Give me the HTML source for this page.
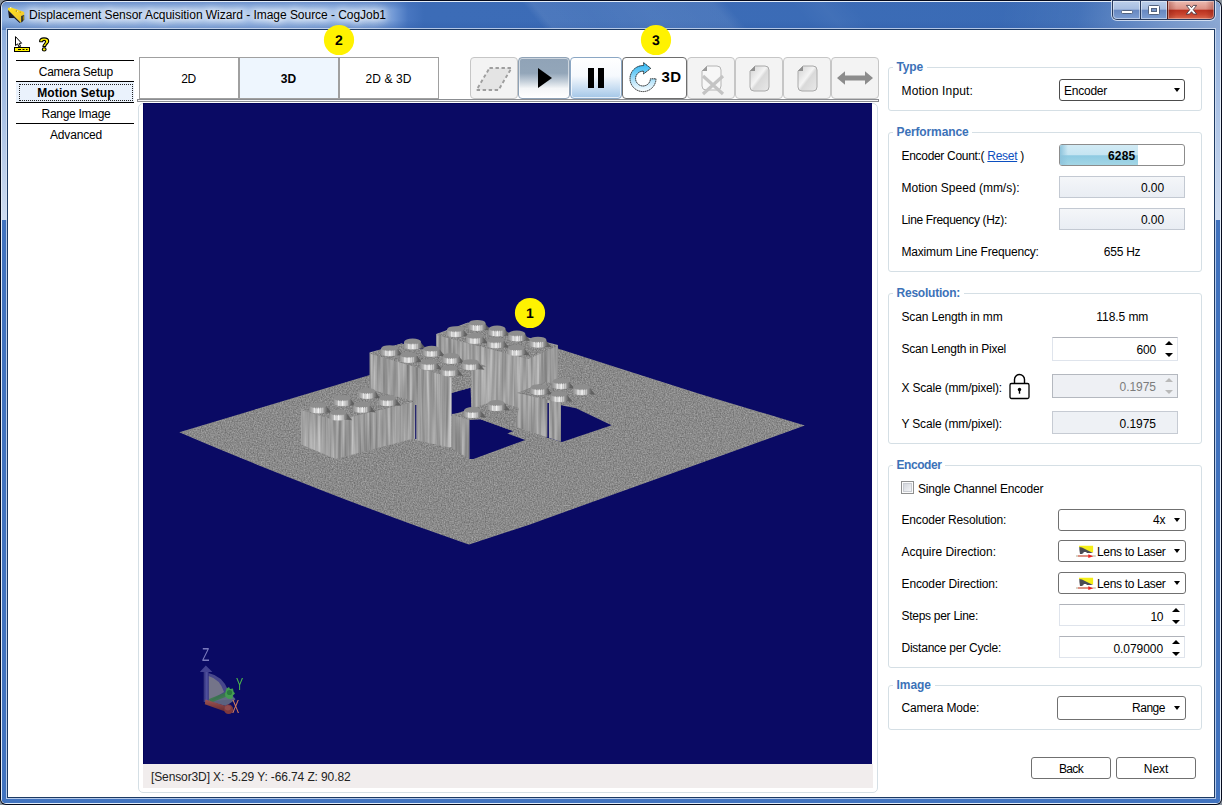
<!DOCTYPE html>
<html lang="en"><head><meta charset="utf-8"><title>Displacement Sensor Acquisition Wizard - Image Source - CogJob1</title>
<style>
html,body{margin:0;padding:0}
body{width:1222px;height:805px;overflow:hidden;background:#8a939d;position:relative;font-family:'Liberation Sans',sans-serif;font-size:12px;color:#000}
div,span,svg,section{position:absolute;box-sizing:border-box}
section{left:0;top:0}
.t{white-space:pre;display:block}
#win{left:0;top:0;width:1222px;height:805px;border-radius:7px 7px 6px 6px;background:#050a1c;overflow:hidden}
#hl{left:1px;top:1px;width:1220px;height:803px;border-radius:6px 6px 5px 5px;background:#e4edf8}
#glass{left:2px;top:2px;width:1218px;height:801px;border-radius:5px 5px 4px 4px;overflow:hidden;background:#3d6dbb}
#client{left:8px;top:30px;width:1206px;height:767px;background:#fff}
#cborder{left:7px;top:29px;width:1208px;height:769px;background:#1d3a63}
.gb{border:1px solid #d5dfe5;border-radius:3px}
.gl{background:#fff;color:#3c72b8;font-weight:bold;padding:0 3px}
.combo{border:1px solid #707070;border-radius:3px;background:#fff}
.fld{border:1px solid #c3c9d2;background:linear-gradient(#f4f6f9,#e9edf3)}
.num{border:1px solid #dfe4ec;border-top-color:#b0b3ba;background:#fff}
.btn{border:1px solid #707070;border-radius:3px;background:#fff}
.tb{border:1px solid #c9c9c9;border-radius:3px;background:#f3f3f3}
.arr{width:0;height:0;border-left:3.5px solid transparent;border-right:3.5px solid transparent;border-top:4px solid #000}
.up{width:0;height:0;border-left:4px solid transparent;border-right:4px solid transparent;border-bottom:4.5px solid #000}
.dn{width:0;height:0;border-left:4px solid transparent;border-right:4px solid transparent;border-top:4.5px solid #000}
.mk text{font-weight:bold;font-size:14px;text-anchor:middle;text-rendering:geometricPrecision;font-family:'Liberation Sans',sans-serif}

</style></head>
<body>
<section id="window-frame">
<div id="win"><div id="hl"></div><div id="glass">
<div style="left:0;top:0;width:1218px;height:28px;background:linear-gradient(90deg,#8fb0df 0,#a9c4ea 60px,#a7c3ea 300px,#9ab9e5 372px,#7098d5 392px,#4876c0 406px,#3c6cb7 422px,#3a6bb5 100%)"></div>
<div style="left:0;top:0;width:1218px;height:28px;background:linear-gradient(180deg,rgba(60,105,180,.55) 0,rgba(60,105,180,0) 8px,rgba(60,105,180,0) 18px,rgba(50,95,170,.55) 100%)"></div>
<div style="left:531px;top:0;width:204px;height:28px;transform:skewX(40deg);background:linear-gradient(90deg,rgba(255,255,255,0) 0,rgba(255,255,255,.085) 10px,rgba(255,255,255,.07) 60px,rgba(255,255,255,.095) 120px,rgba(255,255,255,.08) 190px,rgba(255,255,255,0) 204px)"></div>
<div style="left:800px;top:0;width:60px;height:28px;transform:skewX(40deg);background:linear-gradient(90deg,rgba(255,255,255,0),rgba(255,255,255,.035) 50%,rgba(255,255,255,0))"></div>
<div style="left:1000px;top:0;width:218px;height:28px;background:linear-gradient(100deg,rgba(255,255,255,0) 0,rgba(255,255,255,.05) 35%,rgba(255,255,255,.30) 75%,rgba(255,255,255,.42) 100%)"></div>
<div style="left:0;top:28px;width:5px;height:190px;background:linear-gradient(180deg,#8eaedd,#cddbf0)"></div>
<div style="left:1213px;top:28px;width:5px;height:190px;background:linear-gradient(180deg,#93b1de,#cddbf0)"></div>
<div style="left:0;top:218px;width:5px;height:583px;background:#4173bf"></div>
<div style="left:1213px;top:218px;width:5px;height:583px;background:#3f71bd"></div>
<div style="left:0;top:796px;width:1218px;height:5px;background:#4173bf"></div>
<div style="left:4px;top:26px;width:1210px;height:771px;border:1px solid rgba(214,226,244,.78)"></div>
</div>
<div id="cborder"></div><div id="client"></div>
<svg style="left:6px;top:5px" width="21" height="20" viewBox="6 5 21 20">
<defs><linearGradient id="ti" x1="0" y1="0" x2="1" y2="1"><stop offset="0" stop-color="#ffe21a"/><stop offset=".6" stop-color="#f5cf2a"/><stop offset="1" stop-color="#e0b818"/></linearGradient></defs>
<polygon points="7.9,8.1 11.1,7.4 24.2,12.1 24.2,15 21.3,16.2 21.3,22.2 20.5,22.6 8,10.2" fill="url(#ti)"/>
<polygon points="8,10.1 20.7,22.7 19.4,22.7 14.1,17.9 9,17.9" fill="#1c1c24"/>
<polygon points="21.2,16.1 24.2,14.9 24.2,19.4 22.2,22 21.2,22.4" fill="#2a2614"/>
<path d="M23.3 16.2 V19.8" stroke="#d8b400" stroke-width=".8"/>
<circle cx="10.6" cy="7.7" r=".8" fill="#fff6c8"/><circle cx="16.4" cy="11.1" r=".7" fill="#7a6400"/><circle cx="17.2" cy="11.3" r=".5" fill="#fff"/><circle cx="20.2" cy="12.2" r=".6" fill="#b89a00"/>
</svg>
<div style="left:1111px;top:0;width:105px;height:21px;border-radius:0 0 6px 6px;background:rgba(235,242,252,.75)"></div>
<div style="left:1112px;top:0;width:103px;height:20px;border-radius:0 0 5px 5px;background:#27395c"></div>
<div style="left:1113px;top:1px;width:27px;height:18px;border-radius:0 0 0 4px;background:linear-gradient(180deg,#bccfea 0,#a6bde0 46%,#6787c0 50%,#7d9ed2 100%);box-shadow:inset 0 0 0 1px rgba(255,255,255,.45)"></div>
<div style="left:1141px;top:1px;width:26px;height:18px;background:linear-gradient(180deg,#bccfea 0,#a6bde0 46%,#6787c0 50%,#7d9ed2 100%);box-shadow:inset 0 0 0 1px rgba(255,255,255,.45)"></div>
<div style="left:1168px;top:1px;width:46px;height:18px;border-radius:0 0 4px 0;background:linear-gradient(90deg,rgba(120,20,10,.35) 0,rgba(120,20,10,0) 18%,rgba(120,20,10,0) 82%,rgba(120,20,10,.35) 100%),linear-gradient(180deg,#ecbbb1 0,#dc9084 46%,#b8301e 50%,#c9452f 75%,#d86a50 100%);box-shadow:inset 0 0 0 1px rgba(255,255,255,.35)"></div>
<div style="left:1167px;top:1px;width:1px;height:18px;background:#5a1c16"></div>
<div style="left:1121px;top:10px;width:12px;height:4px;background:#fff;border:1px solid #53637f;border-radius:1.5px"></div>
<div style="left:1148px;top:5px;width:12px;height:10px;background:#fff;border:1px solid #53637f;border-radius:1.5px"></div>
<div style="left:1151px;top:8px;width:6px;height:4px;background:#7695c8;border:1px solid #53637f"></div>
<svg style="left:1184px;top:3px" width="15" height="13" viewBox="1184 3 15 13"><path d="M1186.4 5.4 L1189.6 5.4 L1191.5 7.7 L1193.4 5.4 L1196.6 5.4 L1193.2 9.7 L1196.8 14.1 L1193.5 14.1 L1191.5 11.7 L1189.5 14.1 L1186.2 14.1 L1189.8 9.7 Z" fill="#fff" stroke="#4d3d48" stroke-width=".9" stroke-linejoin="round"/></svg>
</div>
<span class="t" style="left:29.0px;top:7.0px;font-size:12px;line-height:16px;letter-spacing:-0.040px;text-shadow:0 0 6px #fff,0 0 9px #fff,0 0 12px rgba(255,255,255,.9);">Displacement Sensor Acquisition Wizard - Image Source - CogJob1</span>
</section>
<section id="navigation-and-toolbar">
<svg style="left:13px;top:35px" width="19" height="19" viewBox="13 35 19 19">
<path d="M15.5 36.6 L15.5 45.6 L17.6 43.9 L19 47 L20.6 46.3 L19.2 43.4 L21.6 43.2 Z" fill="#fff" stroke="#000" stroke-width="1"/>
<rect x="14.5" y="47.5" width="15" height="4" fill="#fff200" stroke="#000" stroke-width="1"/>
<path d="M18 49.5 h3 M22.5 49.5 h2 M26 49.5 h1.5" stroke="#000" stroke-width="1"/>
</svg>
<svg style="left:37px;top:35px" width="14" height="19" viewBox="37 35 14 19">
<path d="M39.6 41.6 C39.4 38.8 41.4 37.9 44 37.9 C46.8 37.9 48.7 39 48.7 41.2 C48.7 43.8 45.6 44.2 45.6 46.6 L42.9 46.6 C42.9 44 45.6 43.4 45.6 41.6 C45.6 40.8 45 40.4 44.1 40.4 C43.2 40.4 42.6 41 42.6 41.8 Z" fill="#fff200" stroke="#000" stroke-width="1.1" stroke-linejoin="round"/>
<ellipse cx="44.2" cy="49.4" rx="1.9" ry="1.6" fill="#fff200" stroke="#000" stroke-width="1.1"/>
</svg>
<div style="left:16px;top:60px;width:118px;height:1px;background:#000"></div>
<div style="left:16px;top:81px;width:118px;height:1px;background:#000"></div>
<div style="left:16px;top:102px;width:118px;height:1px;background:#000"></div>
<div style="left:16px;top:123px;width:118px;height:1px;background:#000"></div>
<div style="left:16px;top:82px;width:118px;height:20px;background:#eaf2fc"></div>
<div style="left:19px;top:84px;width:114px;height:17px;border:1px dotted #222"></div>
<div style="left:139px;top:57px;width:100px;height:42px;border:1px solid #a0a0a0;background:#fff"></div>
<div style="left:239px;top:57px;width:100px;height:42px;border:1px solid #a0a0a0;background:#eef6fe"></div>
<div style="left:339px;top:57px;width:100px;height:42px;border:1px solid #a0a0a0;background:#fff"></div>
<div style="left:137px;top:99px;width:742px;height:3px;background:#f6f6f6;border:1px solid #8b8d91"></div>
<div style="left:470px;top:57px;width:48px;height:42px;border-radius:4px;background:#f3f3f3;border:1px solid #c6c6c6"></div>
<div style="left:518px;top:57px;width:52px;height:42px;border-radius:4px;background:linear-gradient(180deg,#90a3b7 0,#93a6b9 38%,#c3ced9 58%,#f4f6f8 76%,#fff 100%);border:1px solid #8fa2b6;box-shadow:inset 0 0 0 1px rgba(255,255,255,.55)"></div>
<div style="left:570px;top:57px;width:52px;height:42px;border-radius:4px;background:linear-gradient(180deg,#fff 0,#f6f9fd 45%,#c9def2 75%,#a3c6e7 100%);border:1px solid #8ba7c4;box-shadow:inset 0 0 0 1px rgba(255,255,255,.7)"></div>
<div style="left:622px;top:57px;width:65px;height:42px;border-radius:4px;background:#fff;border:1px solid #6e6e6e"></div>
<div style="left:687px;top:57px;width:48px;height:42px;border-radius:4px;background:#f3f3f3;border:1px solid #c6c6c6"></div>
<div style="left:735px;top:57px;width:48px;height:42px;border-radius:4px;background:#f3f3f3;border:1px solid #c6c6c6"></div>
<div style="left:783px;top:57px;width:48px;height:42px;border-radius:4px;background:#f3f3f3;border:1px solid #c6c6c6"></div>
<div style="left:831px;top:57px;width:48px;height:42px;border-radius:4px;background:#f3f3f3;border:1px solid #c6c6c6"></div>
<svg style="left:474px;top:64px" width="40" height="30" viewBox="0 0 40 30">
<polygon points="15.5,4 37.5,4 24.5,26 2.5,26" fill="#e4e4e4" stroke="#9e9e9e" stroke-width="1.9" stroke-dasharray="3.4 2.6"/></svg>
<svg style="left:536px;top:66px" width="18" height="24" viewBox="0 0 18 24"><polygon points="2,2 16,12 2,22" fill="#000"/></svg>
<div style="left:588px;top:68px;width:6px;height:20px;background:#000"></div><div style="left:598px;top:68px;width:6px;height:20px;background:#000"></div>
<svg style="left:620px;top:55px" width="72" height="46" viewBox="620 55 72 46">
<defs><linearGradient id="rg" x1="0" y1="62" x2="0" y2="92" gradientUnits="userSpaceOnUse"><stop offset="0" stop-color="#2bb5f3"/><stop offset=".3" stop-color="#62c9f6"/><stop offset=".7" stop-color="#c5e9fb"/><stop offset="1" stop-color="#ffffff"/></linearGradient></defs>
<path d="M656 78.8 A13 13 0 1 1 643.6 65.6 L643.6 62.6 L650.8 68.3 L643.6 74 L643.6 71.2 A7.4 7.4 0 1 0 650.4 78.8 Z" fill="url(#rg)" stroke="#1a1a1a" stroke-width="0.9" stroke-linejoin="miter" stroke-dasharray="1.6 0.5"/>
</svg>
<svg style="left:699px;top:64px" width="28" height="32" viewBox="0 0 28 32">
<path d="M8 2 H18 Q22 2 22 6 V22 Q22 26 18 26 H7 Q3 26 3 22 V7 Z" fill="#f7f7f7" stroke="#b5b5b5" stroke-width="1"/>
<path d="M3 7 L8 2 L8 7 Z" fill="#9a9a9a"/>
<path d="M4 12 L24 30 M24 12 L4 30" stroke="#c4c4c4" stroke-width="3.2"/></svg>
<svg style="left:748px;top:64px" width="24" height="30" viewBox="0 0 24 30">
<defs><linearGradient id="dg748" x1="0" y1="0" x2="1" y2="1"><stop offset="0" stop-color="#cfcfcf"/><stop offset=".45" stop-color="#f4f4f4"/><stop offset=".55" stop-color="#d9d9d9"/><stop offset="1" stop-color="#e9e9e9"/></linearGradient></defs>
<path d="M7 2 H17 Q21 2 21 6 V23 Q21 27 17 27 H6 Q2 27 2 23 V7 Z" fill="url(#dg748)" stroke="#aaa" stroke-width="1"/>
<path d="M2 7 L7 2 L7 7 Z" fill="#8f8f8f"/></svg>
<svg style="left:796px;top:64px" width="24" height="30" viewBox="0 0 24 30">
<defs><linearGradient id="dg796" x1="0" y1="0" x2="1" y2="1"><stop offset="0" stop-color="#cfcfcf"/><stop offset=".45" stop-color="#f4f4f4"/><stop offset=".55" stop-color="#d9d9d9"/><stop offset="1" stop-color="#e9e9e9"/></linearGradient></defs>
<path d="M7 2 H17 Q21 2 21 6 V23 Q21 27 17 27 H6 Q2 27 2 23 V7 Z" fill="url(#dg796)" stroke="#aaa" stroke-width="1"/>
<path d="M2 7 L7 2 L7 7 Z" fill="#8f8f8f"/></svg>
<svg style="left:836px;top:69px" width="38" height="18" viewBox="0 0 38 18">
<path d="M1 9 L9 2.2 L9 6.5 L29 6.5 L29 2.2 L37 9 L29 15.8 L29 11.5 L9 11.5 L9 15.8 Z" fill="#8c8c8c"/></svg>
<span class="t" style="left:38.8px;top:63.5px;font-size:12px;line-height:16px;letter-spacing:-0.281px;">Camera Setup</span>
<span class="t" style="left:37.2px;top:84.5px;font-size:12px;line-height:16px;font-weight:bold;letter-spacing:0.126px;">Motion Setup</span>
<span class="t" style="left:41.5px;top:105.5px;font-size:12px;line-height:16px;letter-spacing:-0.277px;">Range Image</span>
<span class="t" style="left:50.0px;top:126.5px;font-size:12px;line-height:16px;letter-spacing:-0.172px;">Advanced</span>
<span class="t" style="left:181.2px;top:70.5px;font-size:12px;line-height:16px;letter-spacing:-0.422px;">2D</span>
<span class="t" style="left:280.8px;top:70.5px;font-size:12px;line-height:16px;font-weight:bold;letter-spacing:0.078px;">3D</span>
<span class="t" style="left:365.5px;top:70.5px;font-size:12px;line-height:16px;letter-spacing:0.092px;">2D &amp; 3D</span>
<span class="t" style="left:661.5px;top:66.8px;font-size:15px;line-height:19px;font-weight:bold;letter-spacing:0.306px;">3D</span>
</section>
<section id="viewer-3d">
<div style="left:138px;top:103px;width:740px;height:690px;border:1px solid #d5dfe5;border-radius:5px"></div>
<div style="left:143px;top:103px;width:729px;height:661px;background:#0a0a64;border-top:1px solid #02025a;border-left:1px solid #02025a"></div>
<div style="left:143px;top:764px;width:730px;height:24px;background:#f1eded"></div>
<svg style="left:143px;top:103px" width="729" height="661" viewBox="143 103 729 661">
<defs>
<filter id="fn" x="0" y="0" width="100%" height="100%" color-interpolation-filters="sRGB">
<feTurbulence type="fractalNoise" baseFrequency="0.75" numOctaves="2" seed="3"/>
<feColorMatrix values="0.32 0 0 0 0.38  0.32 0 0 0 0.38  0.32 0 0 0 0.38  0 0 0 0 1"/>
</filter>
<filter id="fs" x="0" y="0" width="100%" height="100%" color-interpolation-filters="sRGB">
<feTurbulence type="fractalNoise" baseFrequency="0.33 0.012" numOctaves="2" seed="8"/>
<feColorMatrix values="0.42 0 0 0 0.405  0.42 0 0 0 0.405  0.42 0 0 0 0.405  0 0 0 0 1"/>
</filter>
<linearGradient id="sg" x1="0" y1="0" x2="1" y2="0"><stop offset="0" stop-color="#8c8c8c"/><stop offset=".3" stop-color="#c4c4c4"/><stop offset=".5" stop-color="#dadada"/><stop offset=".75" stop-color="#a4a4a4"/><stop offset="1" stop-color="#686868"/></linearGradient>
</defs>
<clipPath id="c1"><polygon points="179.3,432.2 203.3,442.4 227.3,452.5 251.3,462.3 275.3,472.1 299.3,481.6 323.3,491.0 347.3,500.2 371.3,509.3 395.3,518.2 419.3,527.0 443.3,535.5 467.3,543.9 469.1,544.6 530.0,524.4 709.9,459.7 804.8,425.5 700.0,393.9 660.0,381.2 594.3,360.2 509.8,333.1"/></clipPath>
<g clip-path="url(#c1)"><rect x="178" y="332" width="628" height="214" fill="#909090" filter="url(#fn)"/></g>
<polygon points="546.0,400.0 561.0,405.3 576.0,408.3 611.6,425.2 562.0,442.0 546.0,437.0" fill="#0a0a64"/>
<polygon points="469.0,419.2 480.5,419.2 513.3,431.1 507.3,433.5 525.2,440.0 473.5,459.0 469.0,459.0" fill="#0a0a64"/>
<polygon points="449.7,393.4 470.5,387.4 471.5,410.0 451.0,416.0" fill="#0a0a64"/>
<clipPath id="c2"><polygon points="436.2,334.0 468.0,322.5 558.0,345.0 558.0,400.0 559.0,441.0 517.0,427.0 471.5,408.3 471.5,380.0 436.2,372.0"/></clipPath>
<g clip-path="url(#c2)"><rect x="435" y="321" width="126" height="122" fill="#a8a8a8" filter="url(#fs)"/></g>
<clipPath id="c3"><polygon points="449.7,374.0 471.5,368.0 471.5,387.6 449.7,393.6"/></clipPath>
<g clip-path="url(#c3)"><rect x="448" y="367" width="25" height="28" fill="#909090" filter="url(#fn)"/></g>
<clipPath id="c4"><polygon points="436.2,335.0 468.0,323.0 558.0,346.0 528.0,359.0"/></clipPath>
<g clip-path="url(#c4)"><rect x="435" y="322" width="125" height="39" fill="#909090" filter="url(#fn)"/></g>
<polygon points="483.0,321.1 491.0,330.5 484.0,329.9" fill="#5c5c5c" opacity=".9"/>
<path d="M468.9 322.9 L467.9 327.9 A9.3 3.0 0 0 0 486.5 327.9 L485.5 322.9 Z" fill="url(#sg)"/>
<ellipse cx="477.2" cy="322.9" rx="8.3" ry="3.0" fill="#8e8e8e"/>
<rect x="472.8" y="325.1" width="1.3" height="5.3" fill="#f2f2f2" opacity=".75"/>
<rect x="475.0" y="325.1" width="1.0" height="5.3" fill="#d0d0d0" opacity=".75"/>
<rect x="476.8" y="325.1" width="1.4" height="5.3" fill="#fbfbfb" opacity=".75"/>
<rect x="479.2" y="325.1" width="1.1" height="5.3" fill="#e6e6e6" opacity=".75"/>
<rect x="481.2" y="325.1" width="1.2" height="5.3" fill="#cdcdcd" opacity=".75"/>
<polygon points="502.9,326.7 510.9,336.1 503.9,335.5" fill="#5c5c5c" opacity=".9"/>
<path d="M488.8 328.5 L487.8 333.5 A9.3 3.0 0 0 0 506.4 333.5 L505.4 328.5 Z" fill="url(#sg)"/>
<ellipse cx="497.1" cy="328.5" rx="8.3" ry="3.0" fill="#8e8e8e"/>
<rect x="492.7" y="330.7" width="1.3" height="5.3" fill="#f2f2f2" opacity=".75"/>
<rect x="494.9" y="330.7" width="1.0" height="5.3" fill="#d0d0d0" opacity=".75"/>
<rect x="496.7" y="330.7" width="1.4" height="5.3" fill="#fbfbfb" opacity=".75"/>
<rect x="499.1" y="330.7" width="1.1" height="5.3" fill="#e6e6e6" opacity=".75"/>
<rect x="501.1" y="330.7" width="1.2" height="5.3" fill="#cdcdcd" opacity=".75"/>
<polygon points="522.7,331.7 530.7,341.1 523.7,340.5" fill="#5c5c5c" opacity=".9"/>
<path d="M508.6 333.5 L507.6 338.5 A9.3 3.0 0 0 0 526.2 338.5 L525.2 333.5 Z" fill="url(#sg)"/>
<ellipse cx="516.9" cy="333.5" rx="8.3" ry="3.0" fill="#8e8e8e"/>
<rect x="512.5" y="335.7" width="1.3" height="5.3" fill="#f2f2f2" opacity=".75"/>
<rect x="514.7" y="335.7" width="1.0" height="5.3" fill="#d0d0d0" opacity=".75"/>
<rect x="516.5" y="335.7" width="1.4" height="5.3" fill="#fbfbfb" opacity=".75"/>
<rect x="518.9" y="335.7" width="1.1" height="5.3" fill="#e6e6e6" opacity=".75"/>
<rect x="520.9" y="335.7" width="1.2" height="5.3" fill="#cdcdcd" opacity=".75"/>
<polygon points="543.8,337.9 551.8,347.3 544.8,346.7" fill="#5c5c5c" opacity=".9"/>
<path d="M529.7 339.7 L528.7 344.7 A9.3 3.0 0 0 0 547.3 344.7 L546.3 339.7 Z" fill="url(#sg)"/>
<ellipse cx="538.0" cy="339.7" rx="8.3" ry="3.0" fill="#8e8e8e"/>
<rect x="533.6" y="341.9" width="1.3" height="5.3" fill="#f2f2f2" opacity=".75"/>
<rect x="535.8" y="341.9" width="1.0" height="5.3" fill="#d0d0d0" opacity=".75"/>
<rect x="537.6" y="341.9" width="1.4" height="5.3" fill="#fbfbfb" opacity=".75"/>
<rect x="540.0" y="341.9" width="1.1" height="5.3" fill="#e6e6e6" opacity=".75"/>
<rect x="542.0" y="341.9" width="1.2" height="5.3" fill="#cdcdcd" opacity=".75"/>
<polygon points="461.3,327.4 469.3,336.8 462.3,336.2" fill="#5c5c5c" opacity=".9"/>
<path d="M447.2 329.2 L446.2 334.2 A9.3 3.0 0 0 0 464.8 334.2 L463.8 329.2 Z" fill="url(#sg)"/>
<ellipse cx="455.5" cy="329.2" rx="8.3" ry="3.0" fill="#8e8e8e"/>
<rect x="451.1" y="331.4" width="1.3" height="5.3" fill="#f2f2f2" opacity=".75"/>
<rect x="453.3" y="331.4" width="1.0" height="5.3" fill="#d0d0d0" opacity=".75"/>
<rect x="455.1" y="331.4" width="1.4" height="5.3" fill="#fbfbfb" opacity=".75"/>
<rect x="457.5" y="331.4" width="1.1" height="5.3" fill="#e6e6e6" opacity=".75"/>
<rect x="459.5" y="331.4" width="1.2" height="5.3" fill="#cdcdcd" opacity=".75"/>
<polygon points="480.5,334.2 488.5,343.6 481.5,343.0" fill="#5c5c5c" opacity=".9"/>
<path d="M466.4 336.0 L465.4 341.0 A9.3 3.0 0 0 0 484.0 341.0 L483.0 336.0 Z" fill="url(#sg)"/>
<ellipse cx="474.7" cy="336.0" rx="8.3" ry="3.0" fill="#8e8e8e"/>
<rect x="470.3" y="338.2" width="1.3" height="5.3" fill="#f2f2f2" opacity=".75"/>
<rect x="472.5" y="338.2" width="1.0" height="5.3" fill="#d0d0d0" opacity=".75"/>
<rect x="474.3" y="338.2" width="1.4" height="5.3" fill="#fbfbfb" opacity=".75"/>
<rect x="476.7" y="338.2" width="1.1" height="5.3" fill="#e6e6e6" opacity=".75"/>
<rect x="478.7" y="338.2" width="1.2" height="5.3" fill="#cdcdcd" opacity=".75"/>
<polygon points="501.6,338.5 509.6,347.9 502.6,347.3" fill="#5c5c5c" opacity=".9"/>
<path d="M487.5 340.3 L486.5 345.3 A9.3 3.0 0 0 0 505.1 345.3 L504.1 340.3 Z" fill="url(#sg)"/>
<ellipse cx="495.8" cy="340.3" rx="8.3" ry="3.0" fill="#8e8e8e"/>
<rect x="491.4" y="342.5" width="1.3" height="5.3" fill="#f2f2f2" opacity=".75"/>
<rect x="493.6" y="342.5" width="1.0" height="5.3" fill="#d0d0d0" opacity=".75"/>
<rect x="495.4" y="342.5" width="1.4" height="5.3" fill="#fbfbfb" opacity=".75"/>
<rect x="497.8" y="342.5" width="1.1" height="5.3" fill="#e6e6e6" opacity=".75"/>
<rect x="499.8" y="342.5" width="1.2" height="5.3" fill="#cdcdcd" opacity=".75"/>
<polygon points="522.1,346.0 530.1,355.4 523.1,354.8" fill="#5c5c5c" opacity=".9"/>
<path d="M508.0 347.8 L507.0 352.8 A9.3 3.0 0 0 0 525.6 352.8 L524.6 347.8 Z" fill="url(#sg)"/>
<ellipse cx="516.3" cy="347.8" rx="8.3" ry="3.0" fill="#8e8e8e"/>
<rect x="511.9" y="350.0" width="1.3" height="5.3" fill="#f2f2f2" opacity=".75"/>
<rect x="514.1" y="350.0" width="1.0" height="5.3" fill="#d0d0d0" opacity=".75"/>
<rect x="515.9" y="350.0" width="1.4" height="5.3" fill="#fbfbfb" opacity=".75"/>
<rect x="518.3" y="350.0" width="1.1" height="5.3" fill="#e6e6e6" opacity=".75"/>
<rect x="520.3" y="350.0" width="1.2" height="5.3" fill="#cdcdcd" opacity=".75"/>
<clipPath id="c5"><polygon points="517.0,392.0 545.0,382.0 561.0,390.0 561.0,441.5 517.0,427.0"/></clipPath>
<g clip-path="url(#c5)"><rect x="516" y="381" width="47" height="62" fill="#a8a8a8" filter="url(#fs)"/></g>
<rect x="547.4" y="403" width="1.5" height="35" fill="#0a0a64"/>
<clipPath id="c6"><polygon points="517.0,393.0 545.0,382.0 598.0,392.0 561.0,403.0"/></clipPath>
<g clip-path="url(#c6)"><rect x="516" y="381" width="84" height="24" fill="#909090" filter="url(#fn)"/></g>
<polygon points="566.8,379.4 574.8,388.8 567.8,388.2" fill="#5c5c5c" opacity=".9"/>
<path d="M552.7 381.2 L551.7 386.2 A9.3 3.0 0 0 0 570.3 386.2 L569.3 381.2 Z" fill="url(#sg)"/>
<ellipse cx="561.0" cy="381.2" rx="8.3" ry="3.0" fill="#8e8e8e"/>
<rect x="556.6" y="383.4" width="1.3" height="5.3" fill="#f2f2f2" opacity=".75"/>
<rect x="558.8" y="383.4" width="1.0" height="5.3" fill="#d0d0d0" opacity=".75"/>
<rect x="560.6" y="383.4" width="1.4" height="5.3" fill="#fbfbfb" opacity=".75"/>
<rect x="563.0" y="383.4" width="1.1" height="5.3" fill="#e6e6e6" opacity=".75"/>
<rect x="565.0" y="383.4" width="1.2" height="5.3" fill="#cdcdcd" opacity=".75"/>
<polygon points="587.6,385.4 595.6,394.8 588.6,394.2" fill="#5c5c5c" opacity=".9"/>
<path d="M573.5 387.2 L572.5 392.2 A9.3 3.0 0 0 0 591.1 392.2 L590.1 387.2 Z" fill="url(#sg)"/>
<ellipse cx="581.8" cy="387.2" rx="8.3" ry="3.0" fill="#8e8e8e"/>
<rect x="577.4" y="389.4" width="1.3" height="5.3" fill="#f2f2f2" opacity=".75"/>
<rect x="579.6" y="389.4" width="1.0" height="5.3" fill="#d0d0d0" opacity=".75"/>
<rect x="581.4" y="389.4" width="1.4" height="5.3" fill="#fbfbfb" opacity=".75"/>
<rect x="583.8" y="389.4" width="1.1" height="5.3" fill="#e6e6e6" opacity=".75"/>
<rect x="585.8" y="389.4" width="1.2" height="5.3" fill="#cdcdcd" opacity=".75"/>
<polygon points="544.8,385.4 552.8,394.8 545.8,394.2" fill="#5c5c5c" opacity=".9"/>
<path d="M530.7 387.2 L529.7 392.2 A9.3 3.0 0 0 0 548.3 392.2 L547.3 387.2 Z" fill="url(#sg)"/>
<ellipse cx="539.0" cy="387.2" rx="8.3" ry="3.0" fill="#8e8e8e"/>
<rect x="534.6" y="389.4" width="1.3" height="5.3" fill="#f2f2f2" opacity=".75"/>
<rect x="536.8" y="389.4" width="1.0" height="5.3" fill="#d0d0d0" opacity=".75"/>
<rect x="538.6" y="389.4" width="1.4" height="5.3" fill="#fbfbfb" opacity=".75"/>
<rect x="541.0" y="389.4" width="1.1" height="5.3" fill="#e6e6e6" opacity=".75"/>
<rect x="543.0" y="389.4" width="1.2" height="5.3" fill="#cdcdcd" opacity=".75"/>
<polygon points="564.8,392.4 572.8,401.8 565.8,401.2" fill="#5c5c5c" opacity=".9"/>
<path d="M550.7 394.2 L549.7 399.2 A9.3 3.0 0 0 0 568.3 399.2 L567.3 394.2 Z" fill="url(#sg)"/>
<ellipse cx="559.0" cy="394.2" rx="8.3" ry="3.0" fill="#8e8e8e"/>
<rect x="554.6" y="396.4" width="1.3" height="5.3" fill="#f2f2f2" opacity=".75"/>
<rect x="556.8" y="396.4" width="1.0" height="5.3" fill="#d0d0d0" opacity=".75"/>
<rect x="558.6" y="396.4" width="1.4" height="5.3" fill="#fbfbfb" opacity=".75"/>
<rect x="561.0" y="396.4" width="1.1" height="5.3" fill="#e6e6e6" opacity=".75"/>
<rect x="563.0" y="396.4" width="1.2" height="5.3" fill="#cdcdcd" opacity=".75"/>
<clipPath id="c7"><polygon points="369.5,352.5 401.5,343.5 451.5,360.0 451.5,448.0 415.5,440.0 369.5,388.0"/></clipPath>
<g clip-path="url(#c7)"><rect x="368" y="342" width="85" height="108" fill="#a8a8a8" filter="url(#fs)"/></g>
<rect x="449.6" y="376" width="1.8" height="71" fill="#d4d4d4" opacity=".8"/>
<clipPath id="c8"><polygon points="369.5,353.5 401.5,343.5 487.0,366.0 451.0,377.5"/></clipPath>
<g clip-path="url(#c8)"><rect x="368" y="342" width="121" height="37" fill="#909090" filter="url(#fn)"/></g>
<polygon points="418.4,339.7 426.4,349.1 419.4,348.5" fill="#5c5c5c" opacity=".9"/>
<path d="M404.3 341.5 L403.3 346.5 A9.3 3.0 0 0 0 421.9 346.5 L420.9 341.5 Z" fill="url(#sg)"/>
<ellipse cx="412.6" cy="341.5" rx="8.3" ry="3.0" fill="#8e8e8e"/>
<rect x="408.2" y="343.7" width="1.3" height="5.3" fill="#f2f2f2" opacity=".75"/>
<rect x="410.4" y="343.7" width="1.0" height="5.3" fill="#d0d0d0" opacity=".75"/>
<rect x="412.2" y="343.7" width="1.4" height="5.3" fill="#fbfbfb" opacity=".75"/>
<rect x="414.6" y="343.7" width="1.1" height="5.3" fill="#e6e6e6" opacity=".75"/>
<rect x="416.6" y="343.7" width="1.2" height="5.3" fill="#cdcdcd" opacity=".75"/>
<polygon points="437.4,347.0 445.4,356.4 438.4,355.8" fill="#5c5c5c" opacity=".9"/>
<path d="M423.3 348.8 L422.3 353.8 A9.3 3.0 0 0 0 440.9 353.8 L439.9 348.8 Z" fill="url(#sg)"/>
<ellipse cx="431.6" cy="348.8" rx="8.3" ry="3.0" fill="#8e8e8e"/>
<rect x="427.2" y="351.0" width="1.3" height="5.3" fill="#f2f2f2" opacity=".75"/>
<rect x="429.4" y="351.0" width="1.0" height="5.3" fill="#d0d0d0" opacity=".75"/>
<rect x="431.2" y="351.0" width="1.4" height="5.3" fill="#fbfbfb" opacity=".75"/>
<rect x="433.6" y="351.0" width="1.1" height="5.3" fill="#e6e6e6" opacity=".75"/>
<rect x="435.6" y="351.0" width="1.2" height="5.3" fill="#cdcdcd" opacity=".75"/>
<polygon points="457.0,354.2 465.0,363.6 458.0,363.0" fill="#5c5c5c" opacity=".9"/>
<path d="M442.9 356.0 L441.9 361.0 A9.3 3.0 0 0 0 460.5 361.0 L459.5 356.0 Z" fill="url(#sg)"/>
<ellipse cx="451.2" cy="356.0" rx="8.3" ry="3.0" fill="#8e8e8e"/>
<rect x="446.8" y="358.2" width="1.3" height="5.3" fill="#f2f2f2" opacity=".75"/>
<rect x="449.0" y="358.2" width="1.0" height="5.3" fill="#d0d0d0" opacity=".75"/>
<rect x="450.8" y="358.2" width="1.4" height="5.3" fill="#fbfbfb" opacity=".75"/>
<rect x="453.2" y="358.2" width="1.1" height="5.3" fill="#e6e6e6" opacity=".75"/>
<rect x="455.2" y="358.2" width="1.2" height="5.3" fill="#cdcdcd" opacity=".75"/>
<polygon points="476.5,360.4 484.5,369.8 477.5,369.2" fill="#5c5c5c" opacity=".9"/>
<path d="M462.4 362.2 L461.4 367.2 A9.3 3.0 0 0 0 480.0 367.2 L479.0 362.2 Z" fill="url(#sg)"/>
<ellipse cx="470.7" cy="362.2" rx="8.3" ry="3.0" fill="#8e8e8e"/>
<rect x="466.3" y="364.4" width="1.3" height="5.3" fill="#f2f2f2" opacity=".75"/>
<rect x="468.5" y="364.4" width="1.0" height="5.3" fill="#d0d0d0" opacity=".75"/>
<rect x="470.3" y="364.4" width="1.4" height="5.3" fill="#fbfbfb" opacity=".75"/>
<rect x="472.7" y="364.4" width="1.1" height="5.3" fill="#e6e6e6" opacity=".75"/>
<rect x="474.7" y="364.4" width="1.2" height="5.3" fill="#cdcdcd" opacity=".75"/>
<polygon points="395.4,346.4 403.4,355.8 396.4,355.2" fill="#5c5c5c" opacity=".9"/>
<path d="M381.3 348.2 L380.3 353.2 A9.3 3.0 0 0 0 398.9 353.2 L397.9 348.2 Z" fill="url(#sg)"/>
<ellipse cx="389.6" cy="348.2" rx="8.3" ry="3.0" fill="#8e8e8e"/>
<rect x="385.2" y="350.4" width="1.3" height="5.3" fill="#f2f2f2" opacity=".75"/>
<rect x="387.4" y="350.4" width="1.0" height="5.3" fill="#d0d0d0" opacity=".75"/>
<rect x="389.2" y="350.4" width="1.4" height="5.3" fill="#fbfbfb" opacity=".75"/>
<rect x="391.6" y="350.4" width="1.1" height="5.3" fill="#e6e6e6" opacity=".75"/>
<rect x="393.6" y="350.4" width="1.2" height="5.3" fill="#cdcdcd" opacity=".75"/>
<polygon points="414.5,353.1 422.5,362.5 415.5,361.9" fill="#5c5c5c" opacity=".9"/>
<path d="M400.4 354.9 L399.4 359.9 A9.3 3.0 0 0 0 418.0 359.9 L417.0 354.9 Z" fill="url(#sg)"/>
<ellipse cx="408.7" cy="354.9" rx="8.3" ry="3.0" fill="#8e8e8e"/>
<rect x="404.3" y="357.1" width="1.3" height="5.3" fill="#f2f2f2" opacity=".75"/>
<rect x="406.5" y="357.1" width="1.0" height="5.3" fill="#d0d0d0" opacity=".75"/>
<rect x="408.3" y="357.1" width="1.4" height="5.3" fill="#fbfbfb" opacity=".75"/>
<rect x="410.7" y="357.1" width="1.1" height="5.3" fill="#e6e6e6" opacity=".75"/>
<rect x="412.7" y="357.1" width="1.2" height="5.3" fill="#cdcdcd" opacity=".75"/>
<polygon points="434.6,360.4 442.6,369.8 435.6,369.2" fill="#5c5c5c" opacity=".9"/>
<path d="M420.5 362.2 L419.5 367.2 A9.3 3.0 0 0 0 438.1 367.2 L437.1 362.2 Z" fill="url(#sg)"/>
<ellipse cx="428.8" cy="362.2" rx="8.3" ry="3.0" fill="#8e8e8e"/>
<rect x="424.4" y="364.4" width="1.3" height="5.3" fill="#f2f2f2" opacity=".75"/>
<rect x="426.6" y="364.4" width="1.0" height="5.3" fill="#d0d0d0" opacity=".75"/>
<rect x="428.4" y="364.4" width="1.4" height="5.3" fill="#fbfbfb" opacity=".75"/>
<rect x="430.8" y="364.4" width="1.1" height="5.3" fill="#e6e6e6" opacity=".75"/>
<rect x="432.8" y="364.4" width="1.2" height="5.3" fill="#cdcdcd" opacity=".75"/>
<polygon points="455.3,366.5 463.3,375.9 456.3,375.3" fill="#5c5c5c" opacity=".9"/>
<path d="M441.2 368.3 L440.2 373.3 A9.3 3.0 0 0 0 458.8 373.3 L457.8 368.3 Z" fill="url(#sg)"/>
<ellipse cx="449.5" cy="368.3" rx="8.3" ry="3.0" fill="#8e8e8e"/>
<rect x="445.1" y="370.5" width="1.3" height="5.3" fill="#f2f2f2" opacity=".75"/>
<rect x="447.3" y="370.5" width="1.0" height="5.3" fill="#d0d0d0" opacity=".75"/>
<rect x="449.1" y="370.5" width="1.4" height="5.3" fill="#fbfbfb" opacity=".75"/>
<rect x="451.5" y="370.5" width="1.1" height="5.3" fill="#e6e6e6" opacity=".75"/>
<rect x="453.5" y="370.5" width="1.2" height="5.3" fill="#cdcdcd" opacity=".75"/>
<clipPath id="c9"><polygon points="451.7,414.0 469.5,412.0 469.5,459.0 451.7,448.0"/></clipPath>
<g clip-path="url(#c9)"><rect x="450" y="411" width="21" height="50" fill="#a8a8a8" filter="url(#fs)"/></g>
<clipPath id="c10"><polygon points="451.7,415.0 496.0,400.5 519.0,408.0 513.3,431.1 480.5,419.2 469.5,420.0"/></clipPath>
<g clip-path="url(#c10)"><rect x="450" y="399" width="71" height="34" fill="#909090" filter="url(#fn)"/></g>
<polygon points="502.2,401.3 510.2,410.7 503.2,410.1" fill="#5c5c5c" opacity=".9"/>
<path d="M488.1 403.1 L487.1 408.1 A9.3 3.0 0 0 0 505.7 408.1 L504.7 403.1 Z" fill="url(#sg)"/>
<ellipse cx="496.4" cy="403.1" rx="8.3" ry="3.0" fill="#8e8e8e"/>
<rect x="492.0" y="405.3" width="1.3" height="5.3" fill="#f2f2f2" opacity=".75"/>
<rect x="494.2" y="405.3" width="1.0" height="5.3" fill="#d0d0d0" opacity=".75"/>
<rect x="496.0" y="405.3" width="1.4" height="5.3" fill="#fbfbfb" opacity=".75"/>
<rect x="498.4" y="405.3" width="1.1" height="5.3" fill="#e6e6e6" opacity=".75"/>
<rect x="500.4" y="405.3" width="1.2" height="5.3" fill="#cdcdcd" opacity=".75"/>
<polygon points="478.3,408.3 486.3,417.7 479.3,417.1" fill="#5c5c5c" opacity=".9"/>
<path d="M464.2 410.1 L463.2 415.1 A9.3 3.0 0 0 0 481.8 415.1 L480.8 410.1 Z" fill="url(#sg)"/>
<ellipse cx="472.5" cy="410.1" rx="8.3" ry="3.0" fill="#8e8e8e"/>
<rect x="468.1" y="412.3" width="1.3" height="5.3" fill="#f2f2f2" opacity=".75"/>
<rect x="470.3" y="412.3" width="1.0" height="5.3" fill="#d0d0d0" opacity=".75"/>
<rect x="472.1" y="412.3" width="1.4" height="5.3" fill="#fbfbfb" opacity=".75"/>
<rect x="474.5" y="412.3" width="1.1" height="5.3" fill="#e6e6e6" opacity=".75"/>
<rect x="476.5" y="412.3" width="1.2" height="5.3" fill="#cdcdcd" opacity=".75"/>
<clipPath id="c11"><polygon points="301.0,409.0 336.0,405.0 336.0,459.0 301.0,444.6"/></clipPath>
<g clip-path="url(#c11)"><rect x="300" y="404" width="38" height="57" fill="#a8a8a8" filter="url(#fs)"/></g>
<clipPath id="c12"><polygon points="335.5,410.0 415.4,398.0 415.4,438.0 335.5,459.0"/></clipPath>
<g clip-path="url(#c12)"><rect x="334" y="397" width="83" height="64" fill="#a8a8a8" filter="url(#fs)"/></g>
<rect x="415.2" y="405" width="1.1" height="34" fill="#0a0a64"/>
<clipPath id="c13"><polygon points="301.0,410.0 370.0,389.6 415.7,401.4 336.0,420.5"/></clipPath>
<g clip-path="url(#c13)"><rect x="300" y="388" width="117" height="34" fill="#909090" filter="url(#fn)"/></g>
<polygon points="373.0,389.2 381.0,398.6 374.0,398.0" fill="#5c5c5c" opacity=".9"/>
<path d="M358.9 391.0 L357.9 396.0 A9.3 3.0 0 0 0 376.5 396.0 L375.5 391.0 Z" fill="url(#sg)"/>
<ellipse cx="367.2" cy="391.0" rx="8.3" ry="3.0" fill="#8e8e8e"/>
<rect x="362.8" y="393.2" width="1.3" height="5.3" fill="#f2f2f2" opacity=".75"/>
<rect x="365.0" y="393.2" width="1.0" height="5.3" fill="#d0d0d0" opacity=".75"/>
<rect x="366.8" y="393.2" width="1.4" height="5.3" fill="#fbfbfb" opacity=".75"/>
<rect x="369.2" y="393.2" width="1.1" height="5.3" fill="#e6e6e6" opacity=".75"/>
<rect x="371.2" y="393.2" width="1.2" height="5.3" fill="#cdcdcd" opacity=".75"/>
<polygon points="393.3,396.4 401.3,405.8 394.3,405.2" fill="#5c5c5c" opacity=".9"/>
<path d="M379.2 398.2 L378.2 403.2 A9.3 3.0 0 0 0 396.8 403.2 L395.8 398.2 Z" fill="url(#sg)"/>
<ellipse cx="387.5" cy="398.2" rx="8.3" ry="3.0" fill="#8e8e8e"/>
<rect x="383.1" y="400.4" width="1.3" height="5.3" fill="#f2f2f2" opacity=".75"/>
<rect x="385.3" y="400.4" width="1.0" height="5.3" fill="#d0d0d0" opacity=".75"/>
<rect x="387.1" y="400.4" width="1.4" height="5.3" fill="#fbfbfb" opacity=".75"/>
<rect x="389.5" y="400.4" width="1.1" height="5.3" fill="#e6e6e6" opacity=".75"/>
<rect x="391.5" y="400.4" width="1.2" height="5.3" fill="#cdcdcd" opacity=".75"/>
<polygon points="348.2,396.4 356.2,405.8 349.2,405.2" fill="#5c5c5c" opacity=".9"/>
<path d="M334.1 398.2 L333.1 403.2 A9.3 3.0 0 0 0 351.7 403.2 L350.7 398.2 Z" fill="url(#sg)"/>
<ellipse cx="342.4" cy="398.2" rx="8.3" ry="3.0" fill="#8e8e8e"/>
<rect x="338.0" y="400.4" width="1.3" height="5.3" fill="#f2f2f2" opacity=".75"/>
<rect x="340.2" y="400.4" width="1.0" height="5.3" fill="#d0d0d0" opacity=".75"/>
<rect x="342.0" y="400.4" width="1.4" height="5.3" fill="#fbfbfb" opacity=".75"/>
<rect x="344.4" y="400.4" width="1.1" height="5.3" fill="#e6e6e6" opacity=".75"/>
<rect x="346.4" y="400.4" width="1.2" height="5.3" fill="#cdcdcd" opacity=".75"/>
<polygon points="367.8,403.0 375.8,412.4 368.8,411.8" fill="#5c5c5c" opacity=".9"/>
<path d="M353.7 404.8 L352.7 409.8 A9.3 3.0 0 0 0 371.3 409.8 L370.3 404.8 Z" fill="url(#sg)"/>
<ellipse cx="362.0" cy="404.8" rx="8.3" ry="3.0" fill="#8e8e8e"/>
<rect x="357.6" y="407.0" width="1.3" height="5.3" fill="#f2f2f2" opacity=".75"/>
<rect x="359.8" y="407.0" width="1.0" height="5.3" fill="#d0d0d0" opacity=".75"/>
<rect x="361.6" y="407.0" width="1.4" height="5.3" fill="#fbfbfb" opacity=".75"/>
<rect x="364.0" y="407.0" width="1.1" height="5.3" fill="#e6e6e6" opacity=".75"/>
<rect x="366.0" y="407.0" width="1.2" height="5.3" fill="#cdcdcd" opacity=".75"/>
<polygon points="323.9,403.6 331.9,413.0 324.9,412.4" fill="#5c5c5c" opacity=".9"/>
<path d="M309.8 405.4 L308.8 410.4 A9.3 3.0 0 0 0 327.4 410.4 L326.4 405.4 Z" fill="url(#sg)"/>
<ellipse cx="318.1" cy="405.4" rx="8.3" ry="3.0" fill="#8e8e8e"/>
<rect x="313.7" y="407.6" width="1.3" height="5.3" fill="#f2f2f2" opacity=".75"/>
<rect x="315.9" y="407.6" width="1.0" height="5.3" fill="#d0d0d0" opacity=".75"/>
<rect x="317.7" y="407.6" width="1.4" height="5.3" fill="#fbfbfb" opacity=".75"/>
<rect x="320.1" y="407.6" width="1.1" height="5.3" fill="#e6e6e6" opacity=".75"/>
<rect x="322.1" y="407.6" width="1.2" height="5.3" fill="#cdcdcd" opacity=".75"/>
<polygon points="344.2,410.8 352.2,420.2 345.2,419.6" fill="#5c5c5c" opacity=".9"/>
<path d="M330.1 412.6 L329.1 417.6 A9.3 3.0 0 0 0 347.7 417.6 L346.7 412.6 Z" fill="url(#sg)"/>
<ellipse cx="338.4" cy="412.6" rx="8.3" ry="3.0" fill="#8e8e8e"/>
<rect x="334.0" y="414.8" width="1.3" height="5.3" fill="#f2f2f2" opacity=".75"/>
<rect x="336.2" y="414.8" width="1.0" height="5.3" fill="#d0d0d0" opacity=".75"/>
<rect x="338.0" y="414.8" width="1.4" height="5.3" fill="#fbfbfb" opacity=".75"/>
<rect x="340.4" y="414.8" width="1.1" height="5.3" fill="#e6e6e6" opacity=".75"/>
<rect x="342.4" y="414.8" width="1.2" height="5.3" fill="#cdcdcd" opacity=".75"/>
</svg>
<svg style="left:190px;top:640px;opacity:.88" width="70" height="85" viewBox="190 640 70 85">
<defs><linearGradient id="zg" x1="0" y1="0" x2="1" y2="0"><stop offset="0" stop-color="#34347c"/><stop offset=".6" stop-color="#5a5aa6"/><stop offset="1" stop-color="#44448e"/></linearGradient>
<linearGradient id="xg" x1="0" y1="0" x2="0" y2="1"><stop offset="0" stop-color="#b46054"/><stop offset="1" stop-color="#6c2c26"/></linearGradient></defs>
<path d="M208.5 673 A27 28 0 0 1 228 690 L235.5 699 L208.5 701.5 Z" fill="#6868a0" opacity=".75"/>
<path d="M208.5 676 A22 25 0 0 1 224 692 L208.5 701.5 Z" fill="#8a8a8e" opacity=".9"/>
<path d="M208.5 701.5 L229 694 L235.5 699.5 L226 706 Z" fill="#77808a" opacity=".85"/>
<rect x="203.6" y="671" width="5" height="31" fill="url(#zg)"/>
<polygon points="199.8,672 205.8,665.6 212.4,672" fill="#4a4a98"/>
<path d="M209 699 L229 691 L230.5 695 L210 703 Z" fill="#3f8a44" opacity=".85"/>
<path d="M226.5 688.5 l2.5 -1.5 l1 2 l3 -0.5 l0.5 3 l1.5 2 l-2 2 l-0.5 3 l-4 0.5 l-3 -2 l-0.5 -3 Z" fill="#4caf50"/>
<circle cx="229.5" cy="692.5" r="2.6" fill="#2f8a3a"/>
<path d="M205.5 699.5 L229 707 L228 712.5 L204.8 704.3 Z" fill="url(#xg)"/>
<ellipse cx="228.6" cy="709.3" rx="4.6" ry="4.8" fill="#8e4038"/>
<ellipse cx="227.8" cy="707.8" rx="3" ry="2.6" fill="#a85a50" opacity=".8"/>
</svg>
<span class="t" style="left:151.0px;top:768.5px;font-size:12px;line-height:16px;color:#222;letter-spacing:-0.116px;">[Sensor3D] X: -5.29 Y: -66.74 Z: 90.82</span>
<span class="t" style="left:202.2px;top:644.0px;font-size:18px;line-height:23px;color:#7a7abc;transform:scaleX(0.673);transform-origin:0 50%;">Z</span>
<span class="t" style="left:235.5px;top:674.8px;font-size:16px;line-height:20px;color:#4cb84c;transform:scaleX(0.675);transform-origin:0 50%;">Y</span>
<span class="t" style="left:232.0px;top:695.7px;font-size:17.5px;line-height:22px;color:#d07c5c;transform:scaleX(0.616);transform-origin:0 50%;">X</span>
</section>
<section id="settings-panel">
<div class="gb" style="left:888px;top:67px;width:314px;height:44px"></div>
<div style="left:893px;top:65px;width:33.5px;height:5px;background:#fff"></div>
<div class="combo" style="left:1059px;top:79px;width:126px;height:22px;border-color:#4c4c4c"></div>
<div class="arr" style="left:1173.5px;top:88px"></div>
<div class="gb" style="left:888px;top:132px;width:314px;height:140px"></div>
<div style="left:893px;top:130px;width:79px;height:5px;background:#fff"></div>
<div class="combo" style="left:1059px;top:144px;width:126px;height:22px;border-color:#8c8c8c;overflow:hidden"><div style="left:0;top:0;width:78px;height:20px;background:linear-gradient(180deg,#d2ebf5 0,#c6e5f2 48%,#8fcbe2 54%,#a3d6e6 100%)"></div><div style="left:0;top:0;width:8px;height:20px;background:linear-gradient(90deg,#8ec4dc,rgba(143,201,226,0))"></div></div>
<div class="fld" style="left:1059px;top:176px;width:126px;height:22px"></div>
<div class="fld" style="left:1059px;top:208px;width:126px;height:22px"></div>
<div class="gb" style="left:888px;top:293px;width:314px;height:151px"></div>
<div style="left:893px;top:291px;width:70.5px;height:5px;background:#fff"></div>
<div class="num" style="left:1052px;top:337px;width:126px;height:24px"></div>
<div class="up" style="left:1165px;top:340.5px;"></div><div class="dn" style="left:1165px;top:353px;"></div>
<svg style="left:1009px;top:373px" width="21" height="27" viewBox="0 0 21 27">
<path d="M5.5 11 V6.5 A5 5 0 0 1 15.5 6.5 V11" fill="none" stroke="#000" stroke-width="1.4"/>
<rect x="1" y="10.5" width="19" height="15" rx="1.5" fill="#fff" stroke="#000" stroke-width="1.3"/>
<circle cx="10.5" cy="16.5" r="1.7" fill="#000"/><rect x="9.8" y="16.5" width="1.4" height="4.2" fill="#000"/></svg>
<div style="left:1052px;top:374px;width:126px;height:24px;border:1px solid #b4b8bf;background:#eef0f4"></div>
<div class="up" style="left:1165px;top:377.5px;border-bottom-color:#b9b9b9"></div><div class="dn" style="left:1165px;top:390px;border-top-color:#b9b9b9"></div>
<div style="left:1052px;top:411px;width:126px;height:23px;border:1px solid #c6cbd3;background:#eef1f5"></div>
<div class="gb" style="left:888px;top:465px;width:314px;height:203px"></div>
<div style="left:893px;top:463px;width:52px;height:5px;background:#fff"></div>
<div style="left:901px;top:481px;width:13px;height:13px;border:1px solid #8e8f8f;background:#fbfbfb"><div style="left:1px;top:1px;width:9px;height:9px;border:1px solid #c9ccd2;background:linear-gradient(135deg,#d3d6dc,#f3f4f6)"></div></div>
<div class="combo" style="left:1058px;top:509px;width:128px;height:22px"></div>
<div class="arr" style="left:1173.5px;top:518px"></div>
<div class="combo" style="left:1058px;top:540px;width:128px;height:22px"></div>
<div class="arr" style="left:1173.5px;top:549px"></div>
<div class="combo" style="left:1058px;top:572px;width:128px;height:22px"></div>
<div class="arr" style="left:1173.5px;top:581px"></div>
<svg style="left:1074px;top:542px" width="24" height="18" viewBox="1074 542 24 18">
<polygon points="1079,545.7 1093.1,545.7 1093.1,552.4 1090,552 1079,546.9" fill="#f4ee18"/>
<polygon points="1079.3,546.9 1082,547.6 1093,552.9 1086.5,553 1086.5,552 1083.6,552 1083.6,553 1081.8,553.9 1080,553.9 1079.4,550" fill="#4c4c54"/>
<path d="M1076 556 H1095.8" stroke="#c9c2ae" stroke-width="1.4"/><path d="M1078 556 H1090" stroke="#e0675a" stroke-width="1.2"/>
<polygon points="1088.3,554.2 1093.2,556.2 1088.3,558.1" fill="#f01c1c"/></svg>
<svg style="left:1074px;top:574px" width="24" height="18" viewBox="1074 542 24 18">
<polygon points="1079,545.7 1093.1,545.7 1093.1,552.4 1090,552 1079,546.9" fill="#f4ee18"/>
<polygon points="1079.3,546.9 1082,547.6 1093,552.9 1086.5,553 1086.5,552 1083.6,552 1083.6,553 1081.8,553.9 1080,553.9 1079.4,550" fill="#4c4c54"/>
<path d="M1076 556 H1095.8" stroke="#c9c2ae" stroke-width="1.4"/><path d="M1078 556 H1090" stroke="#e0675a" stroke-width="1.2"/>
<polygon points="1088.3,554.2 1093.2,556.2 1088.3,558.1" fill="#f01c1c"/></svg>
<div class="num" style="left:1059px;top:604px;width:126px;height:22px"></div>
<div class="up" style="left:1171.5px;top:607.5px;"></div><div class="dn" style="left:1171.5px;top:620px;"></div>
<div class="num" style="left:1059px;top:636px;width:126px;height:22px"></div>
<div class="up" style="left:1171.5px;top:639.5px;"></div><div class="dn" style="left:1171.5px;top:652px;"></div>
<div class="gb" style="left:888px;top:685px;width:314px;height:45px"></div>
<div style="left:893px;top:683px;width:41.5px;height:5px;background:#fff"></div>
<div class="combo" style="left:1057px;top:696px;width:129px;height:24px"></div>
<div class="arr" style="left:1173.5px;top:706px"></div>
<div class="btn" style="left:1031px;top:757px;width:80px;height:22px"></div>
<div class="btn" style="left:1116px;top:757px;width:80px;height:22px"></div>
<span class="t" style="left:896.5px;top:58.5px;font-size:12px;line-height:16px;font-weight:bold;color:#3c72b8;letter-spacing:-0.156px;">Type</span>
<span class="t" style="left:901.5px;top:82.5px;font-size:12px;line-height:16px;letter-spacing:0.171px;">Motion Input:</span>
<span class="t" style="left:1064.0px;top:82.5px;font-size:12px;line-height:16px;letter-spacing:-0.243px;">Encoder</span>
<span class="t" style="left:896.5px;top:123.5px;font-size:12px;line-height:16px;font-weight:bold;color:#3c72b8;letter-spacing:-0.125px;">Performance</span>
<span class="t" style="left:901.5px;top:147.5px;font-size:12px;line-height:16px;letter-spacing:-0.305px;">Encoder Count:( <span style="position:static;color:#0c4fc0;text-decoration:underline">Reset</span> )</span>
<span class="t" style="left:1108.0px;top:147.5px;font-size:12px;line-height:16px;font-weight:bold;letter-spacing:0.199px;">6285</span>
<span class="t" style="left:901.5px;top:179.5px;font-size:12px;line-height:16px;">Motion Speed (mm/s):</span>
<span class="t" style="left:1141.0px;top:179.5px;font-size:12px;line-height:16px;letter-spacing:-0.090px;">0.00</span>
<span class="t" style="left:901.5px;top:211.5px;font-size:12px;line-height:16px;letter-spacing:-0.332px;">Line Frequency (Hz):</span>
<span class="t" style="left:1141.0px;top:211.5px;font-size:12px;line-height:16px;letter-spacing:-0.090px;">0.00</span>
<span class="t" style="left:901.5px;top:244.0px;font-size:12px;line-height:16px;letter-spacing:-0.182px;">Maximum Line Frequency:</span>
<span class="t" style="left:1103.8px;top:244.0px;font-size:12px;line-height:16px;letter-spacing:-0.255px;">655 Hz</span>
<span class="t" style="left:896.5px;top:284.5px;font-size:12px;line-height:16px;font-weight:bold;color:#3c72b8;letter-spacing:-0.227px;">Resolution:</span>
<span class="t" style="left:901.5px;top:309.0px;font-size:12px;line-height:16px;letter-spacing:-0.141px;">Scan Length in mm</span>
<span class="t" style="left:1096.3px;top:309.0px;font-size:12px;line-height:16px;letter-spacing:-0.059px;">118.5 mm</span>
<span class="t" style="left:901.5px;top:341.0px;font-size:12px;line-height:16px;letter-spacing:-0.245px;">Scan Length in Pixel</span>
<span class="t" style="left:1136.5px;top:341.5px;font-size:12px;line-height:16px;letter-spacing:-0.177px;">600</span>
<span class="t" style="left:901.5px;top:380.0px;font-size:12px;line-height:16px;letter-spacing:-0.186px;">X Scale (mm/pixel):</span>
<span class="t" style="left:1119.5px;top:378.5px;font-size:12px;line-height:16px;color:#7c7c7c;letter-spacing:-0.034px;">0.1975</span>
<span class="t" style="left:901.5px;top:416.0px;font-size:12px;line-height:16px;letter-spacing:-0.174px;">Y Scale (mm/pixel):</span>
<span class="t" style="left:1119.5px;top:415.5px;font-size:12px;line-height:16px;letter-spacing:-0.034px;">0.1975</span>
<span class="t" style="left:896.5px;top:456.5px;font-size:12px;line-height:16px;font-weight:bold;color:#3c72b8;letter-spacing:-0.431px;">Encoder</span>
<span class="t" style="left:918.0px;top:481.0px;font-size:12px;line-height:16px;letter-spacing:-0.187px;">Single Channel Encoder</span>
<span class="t" style="left:901.5px;top:512.0px;font-size:12px;line-height:16px;letter-spacing:-0.178px;">Encoder Resolution:</span>
<span class="t" style="left:1153.0px;top:512.0px;font-size:12px;line-height:16px;letter-spacing:-0.094px;">4x</span>
<span class="t" style="left:901.5px;top:544.0px;font-size:12px;line-height:16px;letter-spacing:-0.012px;">Acquire Direction:</span>
<span class="t" style="left:1097.0px;top:543.5px;font-size:12px;line-height:16px;letter-spacing:-0.325px;">Lens to Laser</span>
<span class="t" style="left:901.5px;top:576.0px;font-size:12px;line-height:16px;letter-spacing:-0.123px;">Encoder Direction:</span>
<span class="t" style="left:1097.0px;top:575.5px;font-size:12px;line-height:16px;letter-spacing:-0.325px;">Lens to Laser</span>
<span class="t" style="left:901.5px;top:608.0px;font-size:12px;line-height:16px;letter-spacing:-0.281px;">Steps per Line:</span>
<span class="t" style="left:1150.5px;top:609.0px;font-size:12px;line-height:16px;letter-spacing:-0.430px;">10</span>
<span class="t" style="left:901.5px;top:640.0px;font-size:12px;line-height:16px;letter-spacing:-0.239px;">Distance per Cycle:</span>
<span class="t" style="left:1113.5px;top:641.0px;font-size:12px;line-height:16px;letter-spacing:-0.070px;">0.079000</span>
<span class="t" style="left:896.5px;top:676.5px;font-size:12px;line-height:16px;font-weight:bold;color:#3c72b8;letter-spacing:-0.037px;">Image</span>
<span class="t" style="left:901.5px;top:700.0px;font-size:12px;line-height:16px;letter-spacing:-0.148px;">Camera Mode:</span>
<span class="t" style="left:1132.0px;top:700.0px;font-size:12px;line-height:16px;letter-spacing:-0.475px;">Range</span>
<span class="t" style="left:1059.0px;top:760.5px;font-size:12px;line-height:16px;letter-spacing:-0.672px;">Back</span>
<span class="t" style="left:1143.8px;top:760.5px;font-size:12px;line-height:16px;letter-spacing:-0.047px;">Next</span>
</section>
<section id="callouts">
<svg class="mk" style="left:323.0px;top:24.3px" width="32" height="32" viewBox="0 0 32 32"><circle cx="16" cy="16" r="15.1" fill="#fff200"/><text x="16" y="21">2</text></svg>
<svg class="mk" style="left:639.5px;top:24.3px" width="32" height="32" viewBox="0 0 32 32"><circle cx="16" cy="16" r="15.1" fill="#fff200"/><text x="16" y="21">3</text></svg>
<svg class="mk" style="left:514.1px;top:297.0px" width="32" height="32" viewBox="0 0 32 32"><circle cx="16" cy="16" r="15.1" fill="#fff200"/><text x="16" y="21">1</text></svg>
</section>
</body></html>
